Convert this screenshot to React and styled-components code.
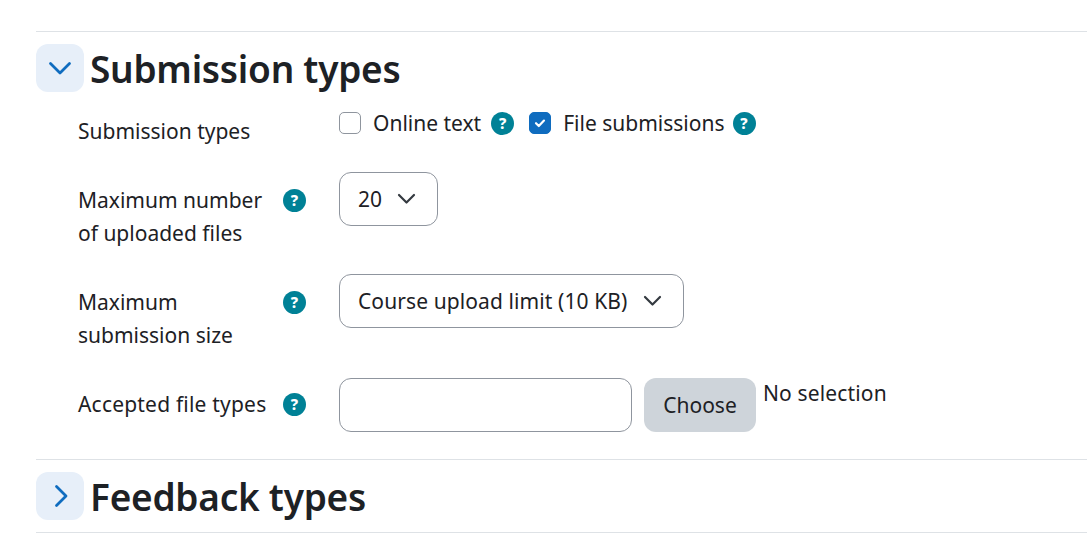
import React from 'react';
import styled, { createGlobalStyle } from 'styled-components';

const Global = createGlobalStyle`
  html, body { margin: 0; padding: 0; background: #fff; overflow: hidden; }
  body { font-family: "Noto Sans", "Open Sans", sans-serif; color: #1d2125; }
`;

const Page = styled.div`
  padding: 31px 0 0 36px;
`;

const Section = styled.section`
  border-top: 1px solid #dee2e6;
  padding-top: 12px;
  ${(p) => p.$last && 'border-bottom: 1px solid #dee2e6; padding-bottom: 12px;'}
`;

const SectionHead = styled.div`
  display: flex;
  align-items: center;
  gap: 6px;
  height: 48px;
`;

const Toggle = styled.div`
  width: 48px;
  height: 48px;
  border-radius: 12px;
  background: #e7eff9;
  display: flex;
  align-items: center;
  justify-content: center;
`;

const Title = styled.h3`
  margin: 2px 0 0;
  font-size: 37px;
  line-height: 50px;
  font-weight: 600;
  letter-spacing: -0.25px;
`;

const Fields = styled.div`
  padding: 20px 0 0 42px;
  display: flex;
  flex-direction: column;
`;

const Row = styled.div`
  display: grid;
  grid-template-columns: 261px 1fr;
  height: ${(p) => p.$height}px;
`;

const LabelCell = styled.div`
  display: flex;
  justify-content: space-between;
  align-items: flex-start;
  width: 228px;
  padding-top: ${(p) => p.$top || 0}px;
`;

const Label = styled.label`
  font-size: 21px;
  line-height: 33px;
  white-space: pre-line;
  letter-spacing: ${(p) => p.$spacing || 0}px;
`;

const HelpDot = styled.span`
  flex: none;
  width: 23px;
  height: 23px;
  border-radius: 50%;
  background: #008196;
  color: #fff;
  font-size: 15px;
  font-weight: 800;
  line-height: 23px;
  text-align: center;
  margin-top: ${(p) => p.$top || 0}px;
`;

const Controls = styled.div`
  display: flex;
  align-items: flex-start;
`;

const Check = styled.span`
  flex: none;
  box-sizing: border-box;
  width: 22px;
  height: 22px;
  border-radius: 5px;
  display: flex;
  align-items: center;
  justify-content: center;
  background: ${(p) => (p.$on ? '#0f6cbf' : '#fff')};
  border: 1px solid ${(p) => (p.$on ? '#0f6cbf' : '#8f959e')};
`;

const CheckText = styled.span`
  font-size: 21px;
  line-height: 23px;
  margin: 0 ${(p) => p.$right || 10}px 0 12px;
  white-space: nowrap;
`;

const Gap = styled.span`
  width: 15px;
`;

const Select = styled.div`
  box-sizing: border-box;
  height: 54px;
  display: flex;
  align-items: center;
  gap: 14px;
  padding: 0 21px 0 18px;
  border: 1px solid #8f959e;
  border-radius: 12px;
  font-size: 21px;
  letter-spacing: 0.1px;
  white-space: nowrap;
`;

const TextInput = styled.div`
  box-sizing: border-box;
  width: 293px;
  height: 54px;
  border: 1px solid #8f959e;
  border-radius: 12px;
`;

const Button = styled.div`
  width: 112px;
  height: 54px;
  margin-left: 12px;
  border-radius: 12px;
  background: #ced4da;
  font-size: 21px;
  line-height: 54px;
  text-align: center;
`;

const Note = styled.span`
  font-size: 21px;
  line-height: 30px;
  margin-left: 7px;
  letter-spacing: 0.15px;
`;

const Chevron = ({ d, color, width, size }) => (
  <svg width={size} height={size} viewBox={`0 0 ${size} ${size}`} fill="none">
    <path d={d} stroke={color} strokeWidth={width} strokeLinecap="round" strokeLinejoin="round" />
  </svg>
);

const Caret = () => <Chevron d="M3 6l7.500 7.500L18 6" color="#343a40" width="2.2" size={20} />;

const App = () => (
  <Page>
    <Global />
    <Section>
      <SectionHead>
        <Toggle>
          <Chevron d="M2.500 7.500L12 17l9.500-9.500" color="#0f6cbf" width="2.8" size={24} />
        </Toggle>
        <Title>Submission types</Title>
      </SectionHead>
      <Fields>
        <Row $height={60}>
          <LabelCell $top={3}>
            <Label>Submission types</Label>
          </LabelCell>
          <Controls>
            <Check />
            <CheckText>Online text</CheckText>
            <HelpDot>?</HelpDot>
            <Gap />
            <Check $on>
              <svg width="14" height="14" viewBox="0 0 14 14" fill="none">
                <path d="M3 7.200l2.800 2.800L11 4.600" stroke="#fff" strokeWidth="2.2" strokeLinecap="round" strokeLinejoin="round" />
              </svg>
            </Check>
            <CheckText $right={8}>File submissions</CheckText>
            <HelpDot>?</HelpDot>
          </Controls>
        </Row>
        <Row $height={102}>
          <LabelCell $top={12}>
            <Label>{'Maximum number\nof uploaded files'}</Label>
            <HelpDot $top={5}>?</HelpDot>
          </LabelCell>
          <Controls>
            <Select>
              20
              <Caret />
            </Select>
          </Controls>
        </Row>
        <Row $height={104}>
          <LabelCell $top={12}>
            <Label>{'Maximum\nsubmission size'}</Label>
            <HelpDot $top={5}>?</HelpDot>
          </LabelCell>
          <Controls>
            <Select>
              Course upload limit (10 KB)
              <Caret />
            </Select>
          </Controls>
        </Row>
        <Row $height={81}>
          <LabelCell $top={10}>
            <Label $spacing={0.2}>Accepted file types</Label>
            <HelpDot $top={5}>?</HelpDot>
          </LabelCell>
          <Controls>
            <TextInput />
            <Button>Choose</Button>
            <Note>No selection</Note>
          </Controls>
        </Row>
      </Fields>
    </Section>
    <Section $last>
      <SectionHead>
        <Toggle>
          <Chevron d="M8.500 2.500L18 12l-9.500 9.500" color="#0f6cbf" width="2.8" size={24} />
        </Toggle>
        <Title>Feedback types</Title>
      </SectionHead>
    </Section>
  </Page>
);

export default App;
